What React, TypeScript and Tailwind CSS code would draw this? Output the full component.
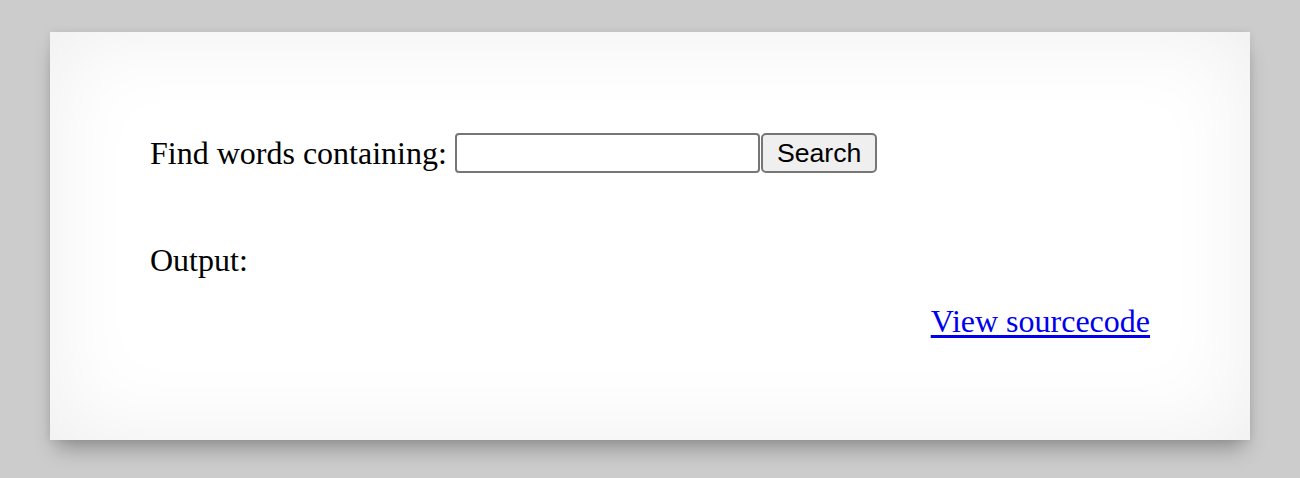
import React from "react";

const App: React.FC = () => {
  return (
    <div className="min-h-screen bg-[#cccccc] px-[50px] pt-[32px] pb-[38px]">
      {/* Card */}
      <div className="bg-white h-[408px] px-[100px] pt-[101px] shadow-[inset_0_0_90px_rgba(0,0,0,0.07),0_14px_20px_-6px_rgba(0,0,0,0.3),0_0_8px_rgba(0,0,0,0.08)] font-['Liberation_Serif',serif] text-[32px] text-black">
        <form className="flex items-center" onSubmit={(e) => e.preventDefault()}>
          <label className="leading-[35px] mr-[8px]">Find words containing:</label>
          <input
            type="text"
            className="w-[305px] h-[40px] bg-white border-2 border-[#767676] rounded-[4px] px-1 text-[26px] font-['Liberation_Sans',sans-serif] outline-none"
          />
          <button
            type="submit"
            className="h-[40px] ml-px px-[14px] bg-[#efefef] border-2 border-[#767676] rounded-[5px] text-[26.67px] leading-none font-['Liberation_Sans',sans-serif] text-black"
          >
            Search
          </button>
        </form>

        {/* Output */}
        <div className="mt-[70px] leading-[35px]">Output:</div>

        <div className="mt-[26px] leading-[35px] text-right">
          <a href="#" className="text-[#0000ee] underline underline-offset-[3px]">
            View sourcecode
          </a>
        </div>
      </div>
    </div>
  );
};

export default App;
